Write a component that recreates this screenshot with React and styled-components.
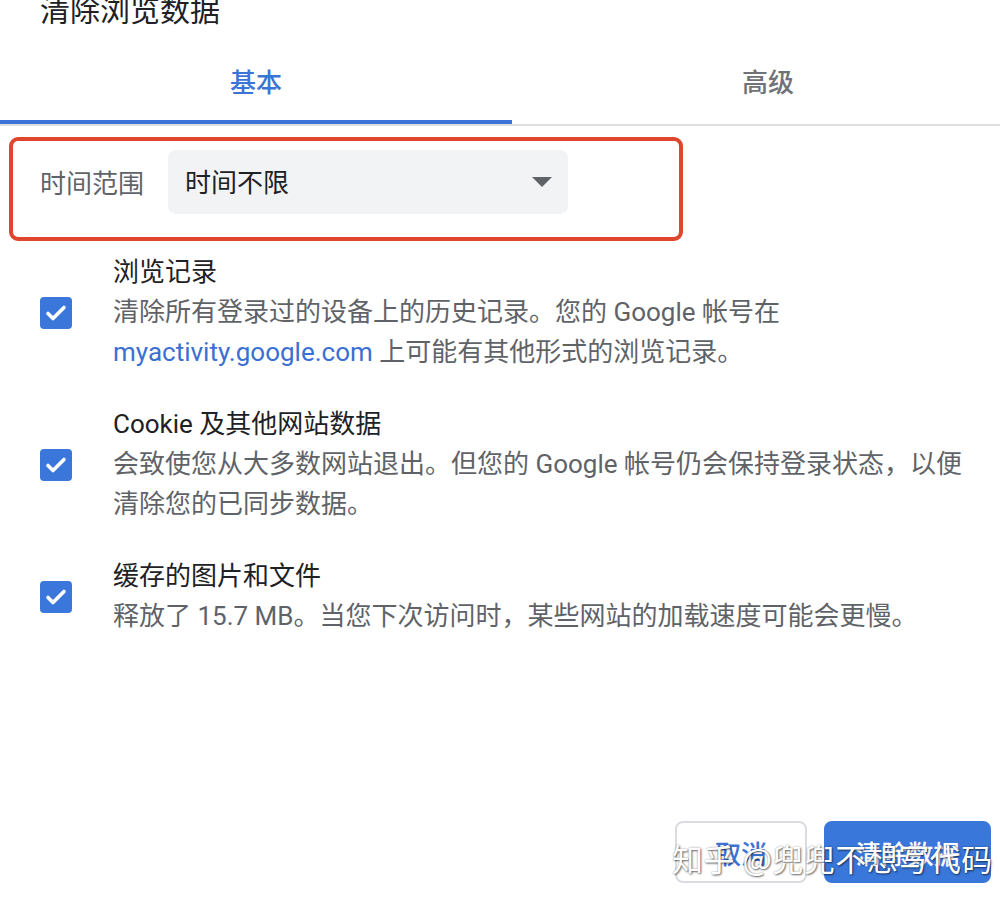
import React from "react";
import styled, { createGlobalStyle } from "styled-components";

const GlobalStyle = createGlobalStyle`
  html, body {
    margin: 0;
    padding: 0;
    background: #fff;
  }
  body {
    font-family: Roboto, "Noto Sans CJK SC", sans-serif;
    color: #202124;
  }
`;

const Page = styled.div`
  position: relative;
  width: 1000px;
  height: 904px;
  overflow: hidden;
  display: flex;
  flex-direction: column;
`;

const Title = styled.div`
  margin: -4px 0 0 40px;
  font-size: 30px;
  line-height: 30px;
  color: #202124;
`;

const TabBar = styled.div`
  display: flex;
  margin-top: 18px;
  border-bottom: 2px solid #dedfe1;
`;

const Tab = styled.div`
  flex: none;
  width: 512px;
  height: 80px;
  box-sizing: border-box;
  display: flex;
  align-items: center;
  justify-content: center;
  padding-bottom: 4px;
  font-size: 26px;
  font-weight: 500;
  color: ${(p) => (p.active ? "#3b73d6" : "#6f7276")};
  border-bottom: 4px solid ${(p) => (p.active ? "#3b73d6" : "transparent")};
`;

const Highlight = styled.div`
  margin: 11px 0 0 9px;
  width: 674px;
  height: 104px;
  box-sizing: border-box;
  border: 4px solid #e0452d;
  border-radius: 9px;
  display: flex;
  align-items: flex-start;
  padding: 9px 0 0 27px;
`;

const RangeLabel = styled.div`
  width: 128px;
  height: 62px;
  display: flex;
  align-items: center;
  font-size: 26px;
  color: #5f6368;
`;

const Select = styled.div`
  width: 400px;
  height: 64px;
  box-sizing: border-box;
  background: #f1f3f4;
  border-radius: 8px;
  display: flex;
  align-items: center;
  justify-content: space-between;
  padding: 0 16px 3px 17px;
  font-size: 26px;
  color: #202124;
`;

const Arrow = styled.div`
  width: 0;
  height: 0;
  margin-top: 3px;
  border-left: 10px solid transparent;
  border-right: 10px solid transparent;
  border-top: 10px solid #5f6368;
`;

const Options = styled.div`
  display: flex;
  flex-direction: column;
  gap: 32px;
  margin-top: 11px;
  padding-left: 40px;
`;

const OptionRow = styled.div`
  display: flex;
  align-items: center;
  gap: 41px;
`;

const Box = styled.div`
  flex: none;
  width: 32px;
  height: 32px;
  margin-top: 2px;
  border-radius: 4px;
  background: #3b77db;
  display: flex;
  align-items: center;
  justify-content: center;
`;

const OptionText = styled.div`
  font-size: 26px;
  line-height: 40px;
`;

const OptionTitle = styled.div`
  color: #202124;
`;

const OptionDesc = styled.div`
  color: #5f6368;
`;

const Link = styled.span`
  color: #3b6fd4;
`;

const Footer = styled.div`
  margin-top: auto;
  display: flex;
  justify-content: flex-end;
  gap: 17px;
  padding: 0 9px 21px 0;
`;

const Button = styled.div`
  height: 62px;
  box-sizing: border-box;
  border-radius: 8px;
  display: flex;
  align-items: center;
  justify-content: center;
  font-size: 26px;
  font-weight: 500;
  width: ${(p) => (p.primary ? "167px" : "132px")};
  background: ${(p) => (p.primary ? "#3a77db" : "#fff")};
  color: ${(p) => (p.primary ? "#fff" : "#3b73d6")};
  border: 2px solid ${(p) => (p.primary ? "#3a77db" : "#dadce0")};
`;

const Watermark = styled.div`
  position: absolute;
  left: 672px;
  top: 838px;
  font-size: 31px;
  line-height: 40px;
  color: #fff;
  letter-spacing: 0.5px;
  text-shadow: 1px 1px 2px rgba(0, 0, 0, 0.55), 0 0 2px rgba(0, 0, 0, 0.35);
  font-family: "Noto Sans CJK SC", sans-serif;
`;

const Check = () => (
  <svg width="24" height="24" viewBox="0 0 24 24">
    <path
      d="M4 12.5l5 5L20 6.5"
      fill="none"
      stroke="#fff"
      strokeWidth="3.6"
      strokeLinecap="round"
      strokeLinejoin="round"
    />
  </svg>
);

const options = [
  {
    title: "浏览记录",
    desc: [
      "清除所有登录过的设备上的历史记录。您的 Google 帐号在",
      <>
        <Link>myactivity.google.com</Link> 上可能有其他形式的浏览记录。
      </>,
    ],
  },
  {
    title: "Cookie 及其他网站数据",
    desc: [
      "会致使您从大多数网站退出。但您的 Google 帐号仍会保持登录状态，以便",
      "清除您的已同步数据。",
    ],
  },
  {
    title: "缓存的图片和文件",
    desc: ["释放了 15.7 MB。当您下次访问时，某些网站的加载速度可能会更慢。"],
  },
];

export default function App() {
  return (
    <Page>
      <GlobalStyle />
      <Title>清除浏览数据</Title>
      <TabBar>
        <Tab active>基本</Tab>
        <Tab>高级</Tab>
      </TabBar>
      <Highlight>
        <RangeLabel>时间范围</RangeLabel>
        <Select>
          <span>时间不限</span>
          <Arrow />
        </Select>
      </Highlight>
      <Options>
        {options.map((o) => (
          <OptionRow key={o.title}>
            <Box>
              <Check />
            </Box>
            <OptionText>
              <OptionTitle>{o.title}</OptionTitle>
              {o.desc.map((d, i) => (
                <OptionDesc key={i}>{d}</OptionDesc>
              ))}
            </OptionText>
          </OptionRow>
        ))}
      </Options>
      <Footer>
        <Button>取消</Button>
        <Button primary>清除数据</Button>
      </Footer>
      <Watermark>知乎 @兜兜不想写代码</Watermark>
    </Page>
  );
}
